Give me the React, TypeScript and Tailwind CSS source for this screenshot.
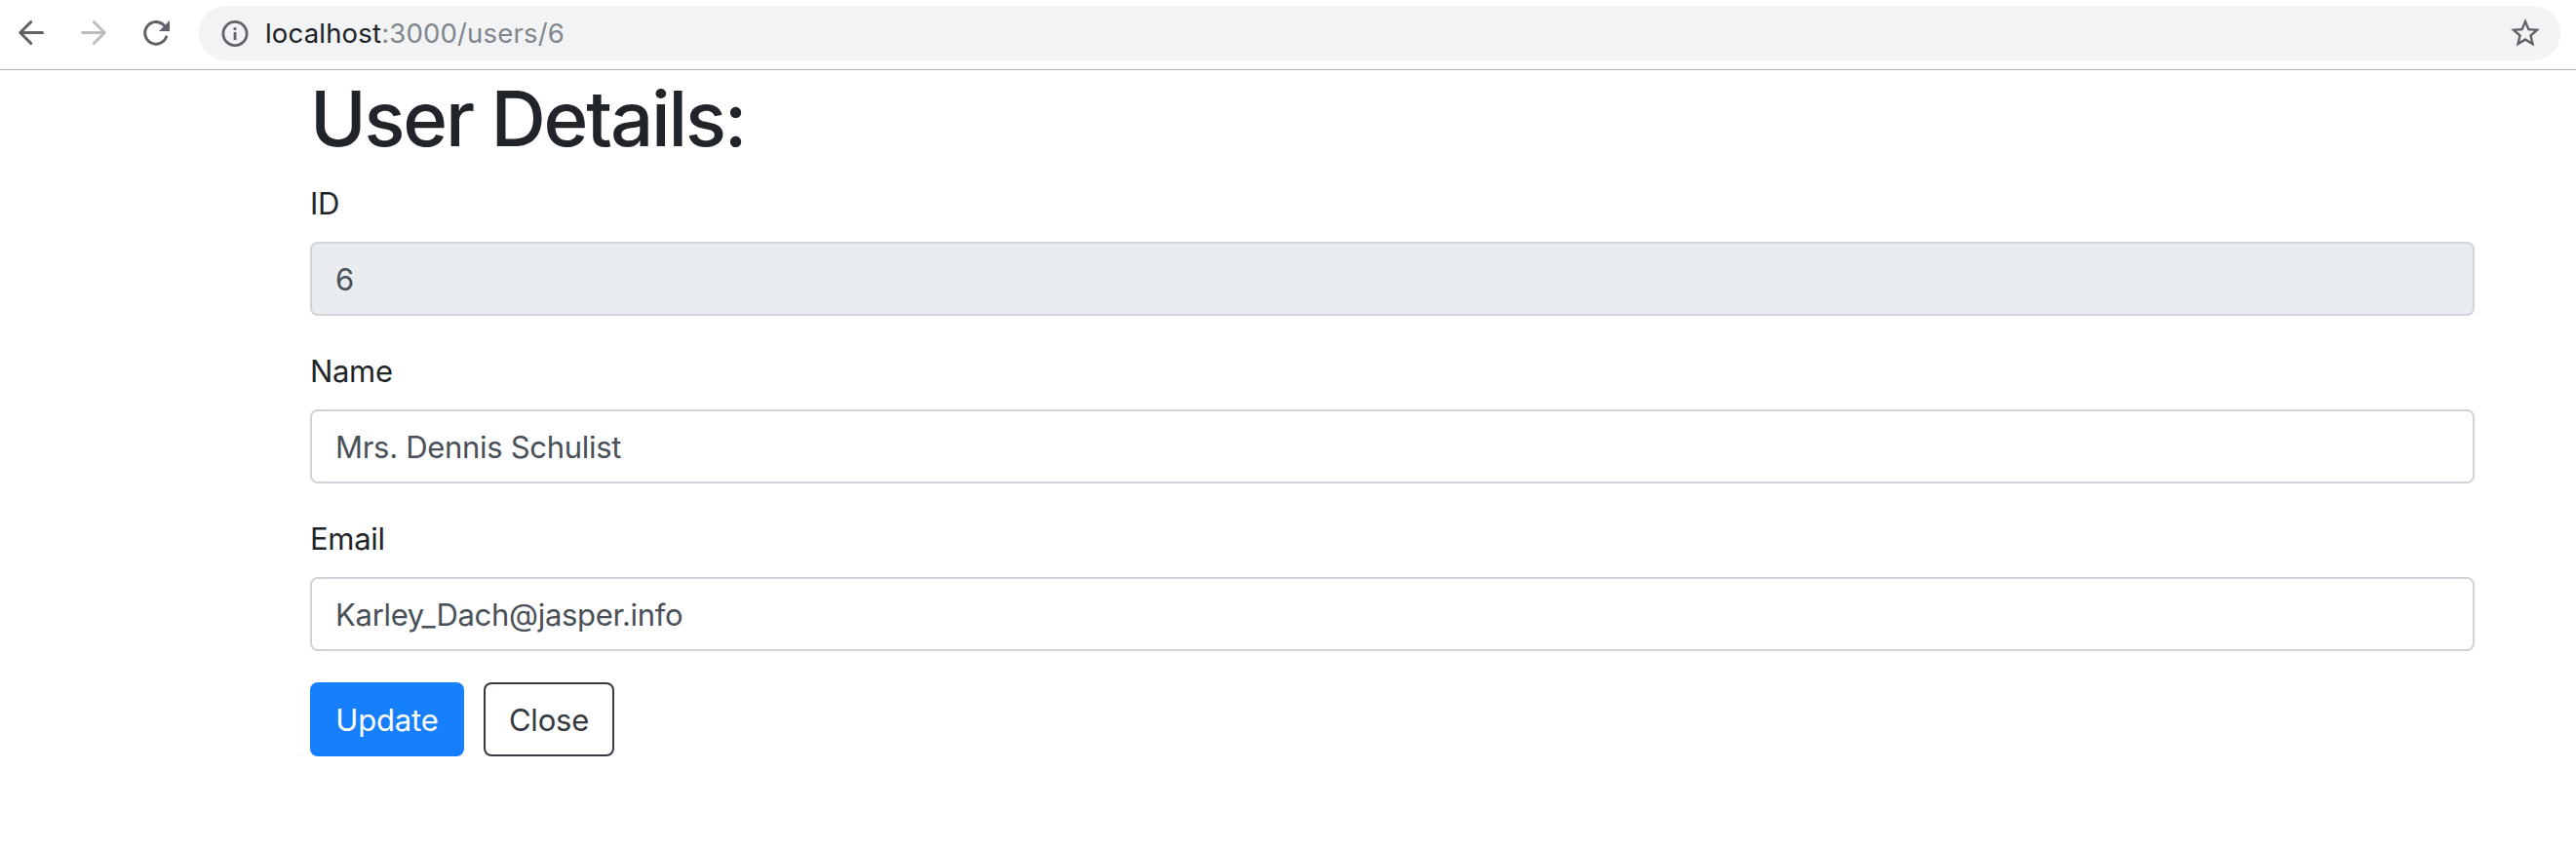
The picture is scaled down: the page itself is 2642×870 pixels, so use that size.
import React from "react";

function BackArrow({ className }: { className: string }) {
  return (
    <svg className={className} viewBox="0 0 32 32" fill="none" stroke="currentColor" strokeWidth="3" strokeLinecap="round" strokeLinejoin="round">
      <path d="M27.5 15.5H5M15.7 4.5L4.7 15.5L15.7 26.5" />
    </svg>
  );
}

function Toolbar() {
  return (
    <header className="flex h-[72px] items-start border-b border-[#b2b4b6] bg-white pl-4 pr-4 pt-1.5">
      <div className="flex h-14 w-[188px] items-center text-[#5f6368]">
        <BackArrow className="size-8" />
        <BackArrow className="ml-8 size-8 -scale-x-100 text-[#babcbe]" />
        <svg className="ml-7 size-10" viewBox="0 0 40 40" fill="none">
          <path d="M30.6 23.8A11.3 11.3 0 1 1 28 11.8" stroke="currentColor" strokeWidth="3" strokeLinecap="round" />
          <path d="M34 7V18H23Z" fill="currentColor" />
        </svg>
      </div>
      <div className="flex h-14 flex-1 items-center rounded-full bg-[#f1f3f4] pl-[20.5px] pr-[18px]">
        <svg className="size-8 text-[#5f6368]" viewBox="0 0 32 32" fill="none" stroke="currentColor" strokeWidth="2.8">
          <circle cx="16" cy="16.5" r="12.1" />
          <path d="M16 15V23M16 10.2V13" />
        </svg>
        <div className="ml-[15.5px] flex-1 text-[27.5px] leading-10 tracking-[0.18px] text-[#80868b]">
          <span className="text-[#202124]">localhost</span>:3000/users/6
        </div>
        <svg className="size-9 text-[#5f6368]" viewBox="0 0 24 24" fill="currentColor">
          <path d="M22 9.24l-7.19-.62L12 2 9.19 8.63 2 9.24l5.46 4.73L5.82 21 12 17.27 18.18 21l-1.63-7.03L22 9.24zM12 15.4l-3.76 2.27 1-4.28-3.32-2.88 4.38-.38L12 6.1l1.71 4.04 4.38.38-3.32 2.88 1 4.28L12 15.4z" />
        </svg>
      </div>
    </header>
  );
}

const fields = [
  { label: "ID", value: "6", disabled: true },
  { label: "Name", value: "Mrs. Dennis Schulist", disabled: false },
  { label: "Email", value: "Karley_Dach@jasper.info", disabled: false },
];

export default function App() {
  return (
    <div className="min-h-screen bg-white font-['Inter',sans-serif] text-[#212529]">
      <Toolbar />
      <main className="ml-[318px] w-[2220px]">
        <h1 className="mb-4 pt-1 text-[78px] font-medium leading-[92px] tracking-[-2.2px]">User Details:</h1>
        {fields.map((f) => (
          <div key={f.label} className="mb-8">
            <label className="mb-4 block pt-0.5 text-[31px] leading-[46px] tracking-[-0.32px]">{f.label}</label>
            <div
              className={`flex h-[76px] items-center rounded-lg border-2 border-[#ced4da] px-6 pt-0.5 text-[31px] leading-[48px] tracking-[-0.3px] text-[#495057] ${
                f.disabled ? "bg-[#e9ecef]" : "bg-white"
              }`}
            >
              {f.value}
            </div>
          </div>
        ))}
        <div className="flex gap-5">
          <button className="h-[76px] w-[158px] rounded-lg bg-[#167ffc] pt-0.5 text-[31px] tracking-[-0.15px] text-white">Update</button>
          <button className="h-[76px] w-[134px] rounded-lg border-2 border-[#343a40] pt-0.5 text-[31px] tracking-[-0.2px] text-[#343a40]">Close</button>
        </div>
      </main>
    </div>
  );
}
